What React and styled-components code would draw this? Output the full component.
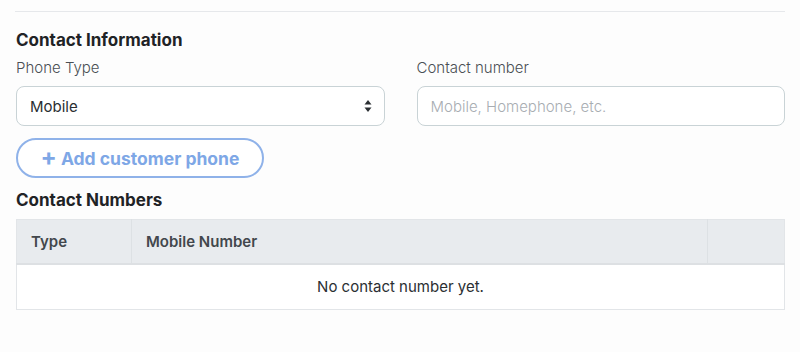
import React from "react";
import styled, { createGlobalStyle } from "styled-components";

const GlobalStyle = createGlobalStyle`
	body {
		margin: 0;
		background: #fdfdfd;
		font-family: Inter, "Noto Sans", sans-serif;
		color: #212529;
	}
`;

const Page = styled.div`
	padding: 11px 15px 0 15px;
`;

const Divider = styled.hr`
	margin: 0;
	border: none;
	border-top: 1px solid #e6e8eb;
`;

const Title = styled.h3`
	margin: ${(p) => p.$top || 0}px 0 0 1px;
	font-size: 17px;
	line-height: 24px;
	font-weight: 700;
	color: #1f2326;
`;

const Row = styled.div`
	display: grid;
	grid-template-columns: 1fr 1fr;
	gap: 32px;
	padding-left: 1px;
`;

const Field = styled.div`
	display: flex;
	flex-direction: column;
`;

const Label = styled.label`
	font-size: 15px;
	line-height: 24px;
	font-weight: 300;
	color: #4a4f54;
	margin: 4px 0 6px;
`;

const Box = styled.div`
	height: 40px;
	box-sizing: border-box;
	border: 1px solid #c9d3d6;
	border-radius: 8px;
	background: #fff;
	display: flex;
	align-items: center;
	justify-content: space-between;
	padding: 0 12px 0 13px;
	font-size: 15px;
	color: ${(p) => (p.$placeholder ? "#a8adb2" : "#2a2e32")};
	font-weight: ${(p) => (p.$placeholder ? 300 : 400)};
`;

const Arrows = styled.svg`
	width: 8px;
	height: 14px;
	fill: #2a2e32;
`;

const AddButton = styled.button`
	margin: 12px 0 0 1px;
	width: 248px;
	height: 40px;
	border: 2px solid #8fb2e9;
	border-radius: 20px;
	background: #fff;
	color: #7ea7e6;
	font-family: Inter, sans-serif;
	font-size: 17.5px;
	font-weight: 700;
	display: flex;
	align-items: center;
	justify-content: center;
	gap: 4px;
	padding: 0;
	span.plus {
		font-size: 24px;
		line-height: 1;
		margin-top: -3px;
	}
`;

const Table = styled.table`
	margin: 7px 0 0 1px;
	width: calc(100% - 1px);
	table-layout: fixed;
	border-collapse: collapse;
	background: #fff;
	border: 1px solid #e2e5e8;
	font-size: 15px;
`;

const Th = styled.th`
	box-sizing: border-box;
	background: #e8ebee;
	height: 44px;
	padding: 0 14px;
	text-align: left;
	font-weight: 600;
	color: #42474c;
	border-right: 1px solid #dde1e4;
	border-bottom: 2px solid #dde0e3;
	width: ${(p) => p.$w || "auto"};
	&:last-child {
		border-right: none;
	}
`;

const Empty = styled.td`
	height: 44px;
	padding: 0;
	text-align: center;
	color: #2b2f33;
	font-weight: 400;
`;

const App = () => {
	return (
		<Page>
			<GlobalStyle />
			<Divider />
			<Title $top={16}>Contact Information</Title>
			<Row>
				<Field>
					<Label>Phone Type</Label>
					<Box>
						Mobile
						<Arrows viewBox="0 0 8 14">
							<path d="M4 1 L7.5 5.5 L0.5 5.5 Z" />
							<path d="M4 13 L7.5 8.5 L0.5 8.5 Z" />
						</Arrows>
					</Box>
				</Field>
				<Field>
					<Label>Contact number</Label>
					<Box $placeholder>Mobile, Homephone, etc.</Box>
				</Field>
			</Row>
			<AddButton>
				<span className="plus">+</span> Add customer phone
			</AddButton>
			<Title $top={10}>Contact Numbers</Title>
			<Table>
				<thead>
					<tr>
						<Th $w="115px">Type</Th>
						<Th>Mobile Number</Th>
						<Th $w="77px"></Th>
					</tr>
				</thead>
				<tbody>
					<tr>
						<Empty colSpan={3}>No contact number yet.</Empty>
					</tr>
				</tbody>
			</Table>
		</Page>
	);
};

export default App;
